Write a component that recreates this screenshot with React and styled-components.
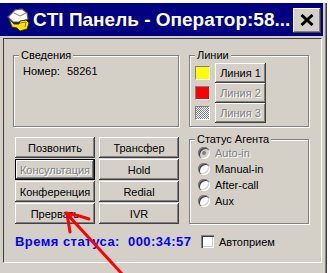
import React from 'react';
import styled, { createGlobalStyle } from 'styled-components';

const GlobalStyle = createGlobalStyle`
  html, body {
    margin: 0;
    padding: 0;
    background: #fff;
  }
  body {
    font-family: "Liberation Sans", Arial, sans-serif;
    font-size: 11px;
    color: #000;
  }
`;

const Screen = styled.div`
  position: relative;
  width: 330px;
  height: 273px;
  overflow: hidden;
  background: #fff;
`;

const Window = styled.div`
  width: 327px;
  height: 270px;
  margin-top: 3px;
  background: #d4d0c8;
  box-shadow: inset -1px 0 #404040, inset -2px 0 #808080;
  display: flex;
  flex-direction: column;
`;

const TitleBar = styled.div`
  height: 33px;
  margin-right: 4px;
  background: #000080;
  display: flex;
  align-items: center;
  padding: 0 2px 0 5px;
  box-sizing: border-box;
`;

const TitleText = styled.div`
  flex: 1;
  margin-left: 2px;
  color: #fff;
  font-weight: bold;
  font-size: 19px;
  white-space: nowrap;
  overflow: hidden;
`;

const CloseButton = styled.div`
  width: 28px;
  height: 25px;
  margin-top: 1px;
  background: #d4d0c8;
  box-shadow: inset -1px -1px #404040, inset 1px 1px #fff, inset -2px -2px #808080;
  display: flex;
  align-items: center;
  justify-content: center;
`;

const Panel = styled.div`
  box-sizing: border-box;
  width: 319px;
  height: 225px;
  margin: 2px 0 0 3px;
  border: 1px solid;
  border-color: #404040 #fff #fff #404040;
  padding: 16px 0 0 9px;
  display: grid;
  grid-template-columns: 166px 120px;
  column-gap: 10px;
  align-content: start;
`;

const Group = styled.div`
  box-sizing: border-box;
  height: ${p => p.$h}px;
  margin-top: ${p => p.$top || 0}px;
  border: 1px solid #808080;
  box-shadow: inset 1px 1px #fff, 1px 1px #fff;
  padding-left: ${p => p.$pad}px;
`;

const Caption = styled.div`
  width: fit-content;
  margin: -7px 0 ${p => p.$gap}px ${p => 5 - p.$pad}px;
  padding: 0 2px;
  line-height: 13px;
  background: #d4d0c8;
`;

const InfoRow = styled.div`
  display: flex;
  gap: 7px;
  line-height: 13px;
`;

const LineRow = styled.div`
  display: flex;
  align-items: center;
  gap: 5px;
  height: 20px;
`;

const Swatch = styled.span`
  box-sizing: border-box;
  width: 15px;
  height: 14px;
  border: 1px solid;
  border-color: #808080 #fff #fff #808080;
  background: ${p => p.$color};
  ${p => p.$checker && `
    background: repeating-conic-gradient(#808080 0 25%, #fff 0 50%) 0 0 / 2px 2px;
  `}
`;

const Button = styled.div`
  box-sizing: border-box;
  width: ${p => p.$w || 'auto'};
  height: ${p => p.$h || 21}px;
  background: #d4d0c8;
  display: flex;
  align-items: center;
  justify-content: center;
  white-space: nowrap;
  color: ${p => (p.$disabled ? '#808080' : '#000')};
  text-shadow: ${p => (p.$disabled ? '1px 1px 0 #fff' : 'none')};
  box-shadow: ${p =>
    p.$focused
      ? 'inset 0 0 0 1px #000, inset -2px -2px #404040, inset 2px 2px #fff, inset -3px -3px #808080'
      : 'inset -1px -1px #404040, inset 1px 1px #fff, inset -2px -2px #808080'};
`;

const ButtonGrid = styled.div`
  margin: 10px 0 0 2px;
  display: grid;
  grid-template-columns: 80px 80px;
  grid-auto-rows: 21px;
  column-gap: 4px;
  row-gap: 1px;
`;

const RadioRow = styled.div`
  display: flex;
  align-items: center;
  gap: 5px;
  height: 16px;
  color: ${p => (p.$disabled ? '#808080' : '#000')};
  text-shadow: ${p => (p.$disabled ? '1px 1px 0 #fff' : 'none')};
`;

const Radio = styled.span`
  width: 12px;
  height: 12px;
  border-radius: 50%;
  background: ${p => (p.$disabled ? '#d4d0c8' : '#fff')};
  box-shadow: inset 1px 1px 0 #808080, inset 2px 2px 0 #404040, inset -1px -1px 0 #fff,
    inset -2px -2px 0 #d4d0c8;
  display: flex;
  align-items: center;
  justify-content: center;

  &::after {
    content: '';
    display: ${p => (p.$checked ? 'block' : 'none')};
    width: 4px;
    height: 4px;
    border-radius: 50%;
    background: #808080;
  }
`;

const StatusRow = styled.div`
  grid-column: 1 / 3;
  display: grid;
  grid-template-columns: 166px 120px;
  column-gap: 10px;
  margin-top: 9px;
  height: 17px;
  align-items: center;
`;

const StatusTime = styled.div`
  margin-left: 2px;
  color: #0000ff;
  font-weight: bold;
  font-size: 13px;
  letter-spacing: 0.45px;
  white-space: pre;
`;

const CheckLine = styled.label`
  margin-left: 12px;
  display: flex;
  align-items: center;
  gap: 5px;
`;

const Checkbox = styled.span`
  width: 13px;
  height: 13px;
  background: #fff;
  box-shadow: inset 1px 1px #808080, inset 2px 2px #404040, inset -1px -1px #fff,
    inset -2px -2px #d4d0c8;
`;

const Annotation = styled.svg`
  position: absolute;
  left: 0;
  top: 0;
  pointer-events: none;
`;

const AppIcon = () => (
  <svg width="26" height="25" viewBox="0 0 26 25">
    <path d="M3 10 L10 3 L17 2 L22 6 L23 12 L16 15 L8 15 Z" fill="#fff" stroke="#606060" strokeWidth="1.2" />
    <path d="M9 6 L15 9 L21 6" fill="none" stroke="#808080" strokeWidth="1" />
    <path d="M4 12 L9 17 L14 17 L15 14 L21 13 L24 16 L22 22 L15 24 L12 21 L7 20 Z" fill="#ffe000" stroke="#404000" strokeWidth="1" />
    <path d="M15 16 L21 15 L20 20" fill="none" stroke="#a08000" strokeWidth="1" />
  </svg>
);

const lines = [
  { name: 'Линия 1', color: '#ffff00' },
  { name: 'Линия 2', color: '#ff0000', disabled: true },
  { name: 'Линия 3', checker: true, disabled: true },
];

const actions = [
  { label: 'Позвонить' },
  { label: 'Трансфер' },
  { label: 'Консультация', disabled: true, focused: true },
  { label: 'Hold' },
  { label: 'Конференция' },
  { label: 'Redial' },
  { label: 'Прервать' },
  { label: 'IVR' },
];

const statuses = [
  { label: 'Auto-in', disabled: true, checked: true },
  { label: 'Manual-in' },
  { label: 'After-call' },
  { label: 'Aux' },
];

export default function App() {
  return (
    <Screen>
      <GlobalStyle />
      <Window>
        <TitleBar>
          <AppIcon />
          <TitleText>CTI Панель - Оператор:58...</TitleText>
          <CloseButton>
            <svg width="14" height="12" viewBox="0 0 14 12">
              <path d="M1.5 1 L12.5 11 M12.5 1 L1.5 11" stroke="#000" strokeWidth="3" />
            </svg>
          </CloseButton>
        </TitleBar>

        <Panel>
          <Group $h={72} $pad={9}>
            <Caption $pad={9} $gap={3}>Сведения</Caption>
            <InfoRow>
              <span>Номер:</span>
              <span>58261</span>
            </InfoRow>
          </Group>

          <Group $h={72} $pad={5}>
            <Caption $pad={5} $gap={1}>Линии</Caption>
            {lines.map(l => (
              <LineRow key={l.name}>
                <Swatch $color={l.color} $checker={l.checker} />
                <Button $w="51px" $h={20} $disabled={l.disabled}>
                  {l.name}
                </Button>
              </LineRow>
            ))}
          </Group>

          <ButtonGrid>
            {actions.map(a => (
              <Button key={a.label} $disabled={a.disabled} $focused={a.focused}>
                {a.label}
              </Button>
            ))}
          </ButtonGrid>

          <Group $h={85} $pad={8} $top={12}>
            <Caption $pad={8} $gap={-1}>Статус Агента</Caption>
            {statuses.map(s => (
              <RadioRow key={s.label} $disabled={s.disabled}>
                <Radio $disabled={s.disabled} $checked={s.checked} />
                {s.label}
              </RadioRow>
            ))}
          </Group>

          <StatusRow>
            <StatusTime>Время статуса:  000:34:57</StatusTime>
            <CheckLine>
              <Checkbox />
              Автоприем
            </CheckLine>
          </StatusRow>
        </Panel>
      </Window>

      <Annotation width="330" height="273" viewBox="0 0 330 273">
        <g stroke="#ff0000" strokeWidth="3" strokeLinecap="round" fill="none">
          <path d="M66 213 Q78 215 89 219" />
          <path d="M67 214 L70 232" />
          <path d="M67 214 L123 275" />
        </g>
      </Annotation>
    </Screen>
  );
}
